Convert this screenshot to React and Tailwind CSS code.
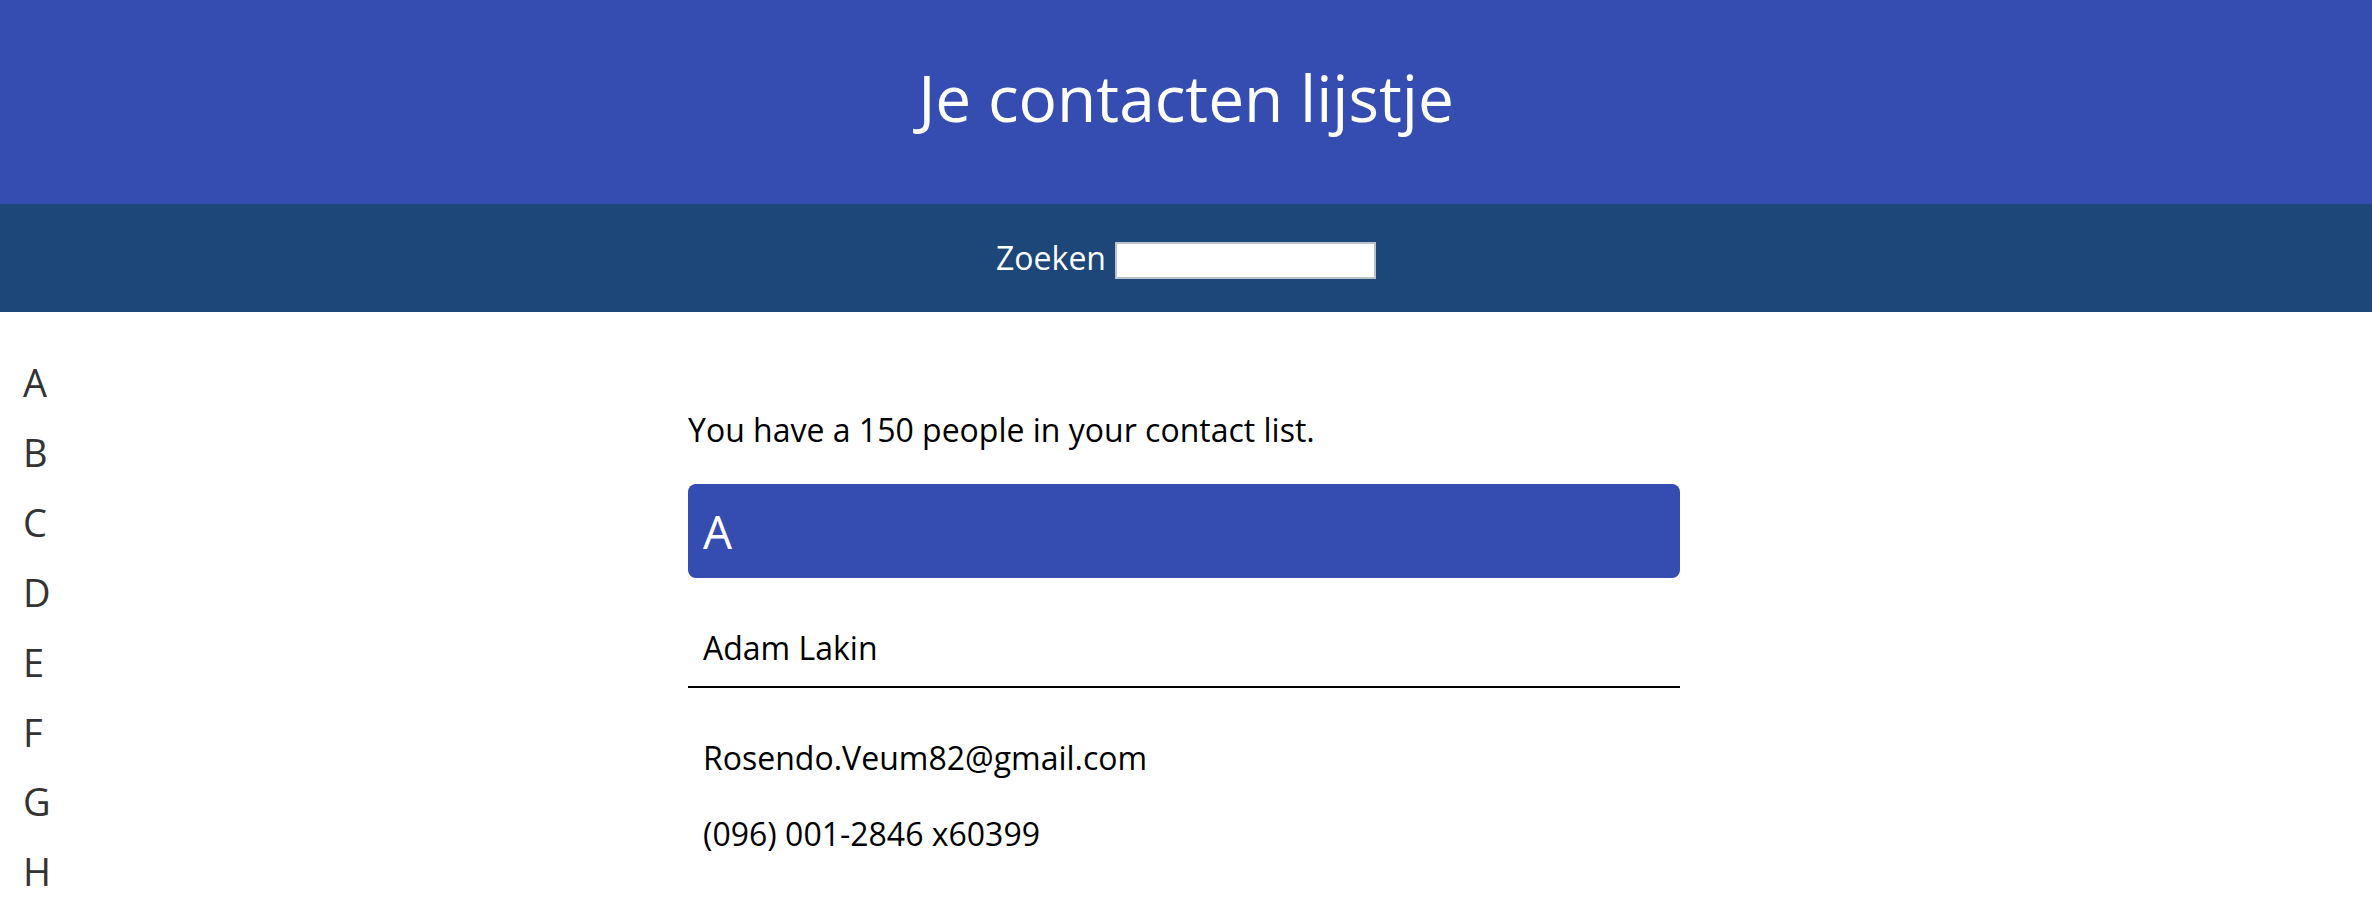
export default function App() {
  const letters = ["A", "B", "C", "D", "E", "F", "G", "H"];
  return (
    <div className="min-h-screen bg-white text-black" style={{ fontFamily: '"Open Sans", "Noto Sans", sans-serif' }}>
      <header className="h-[204px] bg-[#354CB0] pt-[66px] text-center">
        <h1 className="text-[64px] leading-[64px] font-normal text-white">Je contacten lijstje</h1>
      </header>
      <nav className="h-[108px] bg-[#1C4778] pt-[32px] flex justify-center items-start gap-[9px]">
        <span className="text-[32px] leading-[44px] text-white">Zoeken</span>
        <input type="text" className="mt-[6px] h-[37px] w-[261px] bg-white border-2 border-[#bcc2c9] outline-none" />
      </nav>
      <div className="grid grid-cols-[688px_992px_1fr]">
        <ul className="pt-[36px] pl-[23px]">
          {letters.map((l) => (
            <li key={l} className="text-[38px] leading-[69.9px] text-[#333333]">{l}</li>
          ))}
        </ul>
        <main className="pt-[96px]">
          <p className="text-[32px] leading-[44px]">You have a 150 people in your contact list.</p>
          <div className="mt-[32px] h-[94px] rounded-[8px] bg-[#354CB0] px-[15px] flex items-center">
            <span className="text-[46px] leading-[62px] text-white">A</span>
          </div>
          <div className="mt-[32px] py-[16px] px-[15px] border-b-2 border-black">
            <span className="text-[32px] leading-[44px] block">Adam Lakin</span>
          </div>
          <div className="px-[15px]">
            <p className="mt-[48px] text-[32px] leading-[44px]">Rosendo.Veum82@gmail.com</p>
            <p className="mt-[32px] text-[32px] leading-[44px]">(096) 001-2846 x60399</p>
          </div>
        </main>
        <div />
      </div>
    </div>
  );
}
